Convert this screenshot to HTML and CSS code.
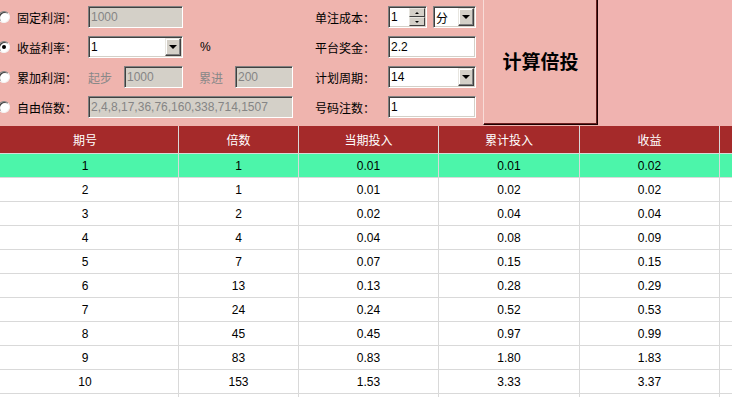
FILE: index.html
```html
<!DOCTYPE html>
<html>
<head>
<meta charset="utf-8">
<link rel="stylesheet" href="styles.css">
</head>
<body>
<div class="panel">
  <div class="opts">
    <div class="row">
      <span class="radio"></span><span class="lbl">固定利润：</span>
      <span class="field dis w95">1000</span>
    </div>
    <div class="row">
      <span class="radio on"></span><span class="lbl">收益利率：</span>
      <span class="field w95">1<span class="drop"></span></span>
      <span class="pct">%</span>
    </div>
    <div class="row">
      <span class="radio"></span><span class="lbl">累加利润：</span>
      <span class="sub">起步</span><span class="field dis w59">1000</span>
      <span class="sub sub2">累进</span><span class="field dis w58">200</span>
    </div>
    <div class="row">
      <span class="radio"></span><span class="lbl">自由倍数：</span>
      <span class="field dis w205">2,4,8,17,36,76,160,338,714,1507</span>
    </div>
  </div>
  <div class="params">
    <div class="row">
      <span class="plbl">单注成本：</span>
      <span class="field w39">1<span class="spin"><span class="sb up"></span><span class="sb dn"></span></span></span>
      <span class="field w43 unit">分<span class="drop"></span></span>
    </div>
    <div class="row">
      <span class="plbl">平台奖金：</span>
      <span class="field w88">2.2</span>
    </div>
    <div class="row">
      <span class="plbl">计划周期：</span>
      <span class="field w88">14<span class="drop"></span></span>
    </div>
    <div class="row">
      <span class="plbl">号码注数：</span>
      <span class="field w88">1</span>
    </div>
  </div>
  <button class="calc">计算倍投</button>
  <div class="rest"></div>
</div>
<div class="table">
  <div class="tr th"><div class="c1">期号</div><div class="c2">倍数</div><div class="c3">当期投入</div><div class="c4">累计投入</div><div class="c5">收益</div><div class="c6"></div></div>
  <div class="tr hi"><div class="c1">1</div><div class="c2">1</div><div class="c3">0.01</div><div class="c4">0.01</div><div class="c5">0.02</div><div class="c6"></div></div>
  <div class="tr"><div class="c1">2</div><div class="c2">1</div><div class="c3">0.01</div><div class="c4">0.02</div><div class="c5">0.02</div><div class="c6"></div></div>
  <div class="tr"><div class="c1">3</div><div class="c2">2</div><div class="c3">0.02</div><div class="c4">0.04</div><div class="c5">0.04</div><div class="c6"></div></div>
  <div class="tr"><div class="c1">4</div><div class="c2">4</div><div class="c3">0.04</div><div class="c4">0.08</div><div class="c5">0.09</div><div class="c6"></div></div>
  <div class="tr"><div class="c1">5</div><div class="c2">7</div><div class="c3">0.07</div><div class="c4">0.15</div><div class="c5">0.15</div><div class="c6"></div></div>
  <div class="tr"><div class="c1">6</div><div class="c2">13</div><div class="c3">0.13</div><div class="c4">0.28</div><div class="c5">0.29</div><div class="c6"></div></div>
  <div class="tr"><div class="c1">7</div><div class="c2">24</div><div class="c3">0.24</div><div class="c4">0.52</div><div class="c5">0.53</div><div class="c6"></div></div>
  <div class="tr"><div class="c1">8</div><div class="c2">45</div><div class="c3">0.45</div><div class="c4">0.97</div><div class="c5">0.99</div><div class="c6"></div></div>
  <div class="tr"><div class="c1">9</div><div class="c2">83</div><div class="c3">0.83</div><div class="c4">1.80</div><div class="c5">1.83</div><div class="c6"></div></div>
  <div class="tr"><div class="c1">10</div><div class="c2">153</div><div class="c3">1.53</div><div class="c4">3.33</div><div class="c5">3.37</div><div class="c6"></div></div>
  <div class="tr fill"><div class="c1"></div><div class="c2"></div><div class="c3"></div><div class="c4"></div><div class="c5"></div><div class="c6"></div></div>
</div>
</body>
</html>
```
FILE: styles.css
```css
html, body {
  margin: 0;
  padding: 0;
}
body {
  width: 732px;
  height: 397px;
  overflow: hidden;
  background: #efb4ae;
  font-family: "Liberation Sans", "Noto Sans CJK SC", sans-serif;
  font-size: 12px;
  color: #000;
}
.panel {
  display: flex;
  height: 126px;
  background: #efb4ae;
}
.opts {
  display: flex;
  flex-direction: column;
  gap: 8px;
  padding-top: 6px;
  width: 293px;
  flex: none;
}
.row {
  display: flex;
  align-items: center;
  height: 22px;
}
.radio {
  flex: none;
  box-sizing: border-box;
  width: 12px;
  height: 12px;
  margin-left: -2px;
  margin-right: 7px;
  border-radius: 50%;
  background: #fff;
  border: 1px solid;
  border-color: #808080 #f4f4f4 #f4f4f4 #808080;
  box-shadow: inset 1px 1px 0 #404040;
  display: flex;
  align-items: center;
  justify-content: center;
}
.radio.on::after {
  content: "";
  width: 4px;
  height: 4px;
  border-radius: 50%;
  background: #000;
}
.lbl {
  width: 71px;
  flex: none;
  font-family: "Noto Sans CJK SC", sans-serif;
}
.field {
  flex: none;
  box-sizing: border-box;
  height: 22px;
  display: flex;
  align-items: center;
  padding-left: 2px;
  background: #fff;
  border: 1px solid;
  border-color: #808080 #ffffff #ffffff #808080;
  box-shadow: inset 1px 1px 0 #404040, inset -1px -1px 0 #d4d0c8;
  white-space: nowrap;
  overflow: hidden;
}
.field.dis {
  background: #d4d0c8;
  color: #858585;
}
.w95 { width: 95px; }
.w59 { width: 59px; }
.w58 { width: 58px; }
.w205 { width: 205px; }
.w88 { width: 88px; }
.w39 { width: 39px; }
.w43 { width: 43px; margin-left: 6px; }
.unit { font-family: "Noto Sans CJK SC", sans-serif; }
.pct {
  margin-left: 17px;
}
.sub {
  width: 36px;
  flex: none;
  color: #888;
  font-family: "Noto Sans CJK SC", sans-serif;
}
.sub2 {
  margin-left: 16px;
}
.drop {
  margin-left: auto;
  margin-right: 1px;
  box-sizing: border-box;
  width: 16px;
  height: 18px;
  background: #d4d0c8;
  border: 1px solid;
  border-color: #e8e6e0 #404040 #404040 #e8e6e0;
  box-shadow: inset -1px -1px 0 #808080, inset 1px 1px 0 #fff;
  display: flex;
  align-items: center;
  justify-content: center;
}
.drop::after {
  content: "";
  width: 0;
  height: 0;
  border-left: 4px solid transparent;
  border-right: 4px solid transparent;
  border-top: 4px solid #000;
}
.spin {
  margin-left: auto;
  margin-right: 1px;
  display: flex;
  flex-direction: column;
  height: 18px;
}
.sb {
  box-sizing: border-box;
  width: 16px;
  height: 9px;
  background: #d4d0c8;
  border: 1px solid;
  border-color: #e8e6e0 #404040 #404040 #e8e6e0;
  display: flex;
  align-items: center;
  justify-content: center;
}
.sb.up::after {
  content: "";
  border-left: 2px solid transparent;
  border-right: 2px solid transparent;
  border-bottom: 2px solid #000;
}
.sb.dn::after {
  content: "";
  border-left: 2px solid transparent;
  border-right: 2px solid transparent;
  border-top: 2px solid #000;
}
.params {
  display: flex;
  flex-direction: column;
  gap: 8px;
  padding-top: 6px;
  margin-left: 22px;
  width: 161px;
  flex: none;
}
.plbl {
  width: 73px;
  flex: none;
  font-family: "Noto Sans CJK SC", sans-serif;
}
.calc {
  flex: none;
  box-sizing: border-box;
  margin: -1px 0 0 7px;
  width: 115px;
  height: 126px;
  padding: 0 0 4px 0;
  background: #efb4ae;
  border: 1px solid;
  border-color: #f8dcd8 #1a0000 #1a0000 #f8dcd8;
  box-shadow: inset -1px -1px 0 #6a2020;
  font-family: "Noto Sans CJK SC", sans-serif;
  font-size: 19px;
  font-weight: bold;
  color: #000;
}
.rest {
  flex: 1;
  background: #f0b3b0;
}
.table {
  display: flex;
  flex-direction: column;
}
.tr {
  display: flex;
  flex: none;
  height: 24px;
  background: #fff;
}
.tr > div {
  box-sizing: border-box;
  height: 100%;
  border-right: 1px solid #d9d9d9;
  border-bottom: 1px solid #d9d9d9;
  display: flex;
  align-items: center;
  justify-content: center;
}
.tr.th {
  height: 28px;
  background: #a52a2a;
  color: #fff;
  font-family: "Noto Sans CJK SC", sans-serif;
}
.tr.hi {
  background: #4cf5aa;
}
.tr.fill {
  height: 3px;
}
.tr.fill > div {
  border-bottom: 0;
}
.c1 { width: 179px; padding-right: 8px; }
.c2 { width: 120px; }
.c3 { width: 140px; }
.c4 { width: 141px; }
.c5 { width: 140px; }
.c6 { flex: 1; }
.tr > .c6 { border-right: 0; }
```
